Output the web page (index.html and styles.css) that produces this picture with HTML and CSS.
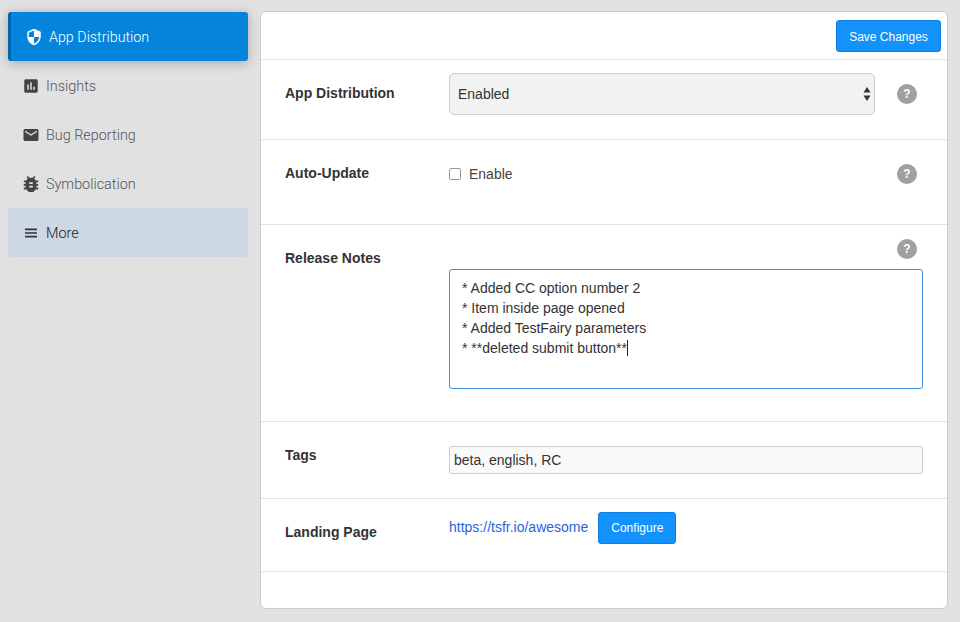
FILE: index.html
```html
<!DOCTYPE html>
<html lang="en">
<head>
  <meta charset="UTF-8">
  <title>App Settings</title>
  <link rel="stylesheet" href="styles.css">
</head>
<body>
  <nav class="sidebar">
    <a class="nav-item active" href="#">
      <svg class="nav-icon" viewBox="0 0 24 24"><path fill="#fff" d="M12 1 3 5v6c0 5.550 3.840 10.740 9 12 5.160-1.260 9-6.450 9-12V5l-9-4zm0 10.990h7c-.53 4.120-3.280 7.790-7 8.940V12H5V6.300l7-3.110v8.800z"/></svg>
      App Distribution
    </a>
    <a class="nav-item" href="#">
      <svg class="nav-icon" viewBox="0 0 24 24"><path fill="#444" d="M19 3H5c-1.100 0-2 .9-2 2v14c0 1.100.9 2 2 2h14c1.100 0 2-.9 2-2V5c0-1.100-.9-2-2-2zM9 17H7v-7h2v7zm4 0h-2V7h2v10zm4 0h-2v-4h2v4z"/></svg>
      Insights
    </a>
    <a class="nav-item" href="#">
      <svg class="nav-icon" viewBox="0 0 24 24"><path fill="#444" d="M20 4H4c-1.100 0-2 .9-2 2v12c0 1.100.9 2 2 2h16c1.100 0 2-.9 2-2V6c0-1.100-.9-2-2-2zm0 4-8 5-8-5V6l8 5 8-5v2z"/></svg>
      Bug Reporting
    </a>
    <a class="nav-item" href="#">
      <svg class="nav-icon" viewBox="2.500 2 19 20"><path fill="#444" d="M20 8h-2.800a6 6 0 0 0-1.800-2l1.600-1.600L15.600 3l-2.200 2.200a6 6 0 0 0-2.800 0L8.400 3 7 4.400 8.600 6a6 6 0 0 0-1.800 2H4v2h2.100c-.1.300-.1.700-.1 1v1H4v2h2v1c0 .3 0 .7.100 1H4v2h2.800a6 6 0 0 0 10.400 0H20v-2h-2.100c.1-.3.100-.7.100-1v-1h2v-2h-2v-1c0-.3 0-.7-.1-1H20V8zm-6 8h-4v-2h4v2zm0-4h-4v-2h4v2z"/></svg>
      Symbolication
    </a>
    <a class="nav-item more" href="#">
      <svg class="nav-icon" viewBox="0 0 24 24"><path fill="#333" d="M4 18h16v-2.200H4V18zm0-4.900h16v-2.200H4v2.200zM4 6v2.200h16V6H4z"/></svg>
      More
    </a>
  </nav>

  <main class="panel">
    <div class="panel-head">
      <button class="btn save" type="button">Save Changes</button>
    </div>

    <section class="row row-dist">
      <label class="row-label">App Distribution</label>
      <div class="select-wrap">
        <select class="select">
          <option>Enabled</option>
        </select>
        <svg class="select-arrows" viewBox="0 0 8 14"><path fill="#333" d="M4 0l3.500 5.500h-7zM4 14L.5 8.500h7z"/></svg>
      </div>
      <span class="help">?</span>
    </section>

    <section class="row row-update">
      <label class="row-label">Auto-Update</label>
      <label class="check">
        <input type="checkbox">
        Enable
      </label>
      <span class="help">?</span>
    </section>

    <section class="row row-notes">
      <label class="row-label">Release Notes</label>
      <span class="help">?</span>
      <div class="notes">
        <div>* Added CC option number 2</div>
        <div>* Item inside page opened</div>
        <div>* Added TestFairy parameters</div>
        <div>* **deleted submit button**<span class="caret"></span></div>
      </div>
    </section>

    <section class="row row-tags">
      <label class="row-label">Tags</label>
      <input class="tags" type="text" value="beta, english, RC">
    </section>

    <section class="row row-landing">
      <label class="row-label">Landing Page</label>
      <div class="landing">
        <a href="#">https://tsfr.io/awesome</a>
        <button class="btn configure" type="button">Configure</button>
      </div>
    </section>
  </main>
</body>
</html>
```

FILE: styles.css
```css
* {
  box-sizing: border-box;
}

body {
  margin: 0;
  height: 622px;
  overflow: hidden;
  background: #e1e1e1;
  color: #333;
  font-family: "Liberation Sans", Arial, sans-serif;
  font-size: 14px;
  display: flex;
  align-items: flex-start;
  padding: 11px 12px 0 8px;
  gap: 12px;
}

/* sidebar */
.sidebar {
  width: 240px;
  flex: none;
  padding-top: 1px;
}

.nav-item {
  display: flex;
  align-items: center;
  height: 49px;
  padding: 1px 0 0 14px;
  gap: 6px;
  color: #555;
  font-family: Roboto, sans-serif;
  font-weight: 300;
  font-size: 14.4px;
  text-decoration: none;
  border-radius: 3px;
}

.nav-icon {
  width: 18px;
  height: 18px;
  flex: none;
}

.nav-item.active {
  background: #0484dc;
  border-left: 3px solid #0565ad;
  padding-left: 14px;
  font-size: 14.3px;
  color: #fff;
  box-shadow: 0 2px 12px rgba(0, 0, 0, 0.25);
}

.nav-item.more {
  background: #cdd8e5;
  color: #222;
}

/* main panel */
.panel {
  width: 688px;
  height: 598px;
  background: #fff;
  border: 1px solid #ccc;
  border-radius: 6px;
}

.panel-head {
  display: flex;
  justify-content: flex-end;
  height: 47px;
  padding: 8px 6px 0 0;
}

.btn {
  background: #1492fb;
  color: #fff;
  border: 1px solid #0f7fdf;
  border-radius: 3px;
  font-family: "Liberation Sans", Arial, sans-serif;
  font-size: 12px;
}

.save {
  width: 105px;
  height: 32px;
  padding-top: 3px;
}

.row {
  display: grid;
  grid-template-columns: 164px 426px 48px;
  align-items: start;
  padding-left: 24px;
  border-top: 1px solid #e3e3e3;
}

.row-label {
  font-weight: bold;
  color: #333;
  line-height: 16px;
}

.help {
  grid-column: 3;
  justify-self: end;
  margin-right: 6px;
  width: 20px;
  height: 20px;
  border-radius: 50%;
  background: #a0a0a0;
  color: #fff;
  font-size: 12px;
  font-weight: bold;
  line-height: 20px;
  text-align: center;
}

.row-dist {
  height: 80px;
  padding-top: 13px;
}

.row-dist .row-label {
  margin-top: 12px;
}

.row-dist .help {
  margin-top: 11px;
}

.select-wrap {
  position: relative;
}

.select {
  display: block;
  width: 100%;
  height: 42px;
  padding: 0 8px;
  background: #f2f2f2;
  border: 1px solid #ccc;
  border-radius: 5px;
  color: #333;
  font-family: "Liberation Sans", Arial, sans-serif;
  font-size: 14px;
  appearance: none;
}

.select-arrows {
  position: absolute;
  top: 14px;
  right: 4px;
  width: 8px;
  height: 14px;
}

.row-update {
  height: 85px;
  padding-top: 25px;
}

.row-update .help {
  margin-top: -1px;
}

.check {
  display: flex;
  align-items: center;
  gap: 8px;
  height: 18px;
  color: #444;
}

.check input {
  margin: 0;
  width: 12px;
  height: 12px;
  appearance: none;
  background: #fff;
  border: 1px solid #9a9a9a;
  border-radius: 2px;
}

.row-notes {
  height: 197px;
  padding-top: 14px;
  grid-template-rows: 20px auto;
}

.row-notes .row-label {
  margin-top: 11px;
  grid-row: 1 / 3;
}

.notes {
  grid-column: 2 / 4;
  grid-row: 2;
  height: 120px;
  margin-top: 10px;
  padding: 8px 12px;
  border: 1px solid #3f92e0;
  border-radius: 3px;
  line-height: 20px;
  color: #333;
}

.caret {
  display: inline-block;
  width: 1px;
  height: 16px;
  background: #222;
  vertical-align: -3px;
}

.row-tags {
  height: 77px;
  padding-top: 24px;
}

.row-tags .row-label {
  margin-top: 1px;
}

.tags {
  grid-column: 2 / 4;
  height: 28px;
  padding: 0 4px;
  background: #fafafa;
  border: 1px solid #ccc;
  border-radius: 3px;
  color: #333;
  font-family: "Liberation Sans", Arial, sans-serif;
  font-size: 14px;
}

.row-landing {
  height: 74px;
  border-bottom: 1px solid #e3e3e3;
  padding-top: 13px;
}

.row-landing .row-label {
  margin-top: 12px;
}

.landing {
  display: flex;
  align-items: center;
  gap: 10px;
  grid-column: 2 / 4;
}

.landing a {
  color: #2a62e0;
  text-decoration: none;
  position: relative;
  top: -1px;
}

.configure {
  width: 78px;
  height: 32px;
}
```
